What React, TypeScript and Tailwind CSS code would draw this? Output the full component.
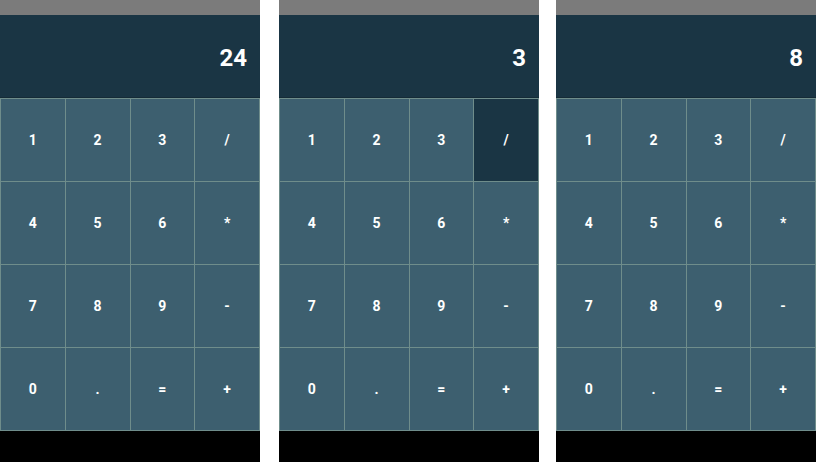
import React from "react";

const KEYS = ["1", "2", "3", "/", "4", "5", "6", "*", "7", "8", "9", "-", "0", ".", "=", "+"];

function Calculator({ value, pressed }: { value: string; pressed?: string }) {
  return (
    <div className="flex w-[260px] flex-col bg-black">
      <div className="h-[15px] bg-[#7b7b7b]" />
      {/* display */}
      <div className="flex h-[82px] items-center justify-end bg-[#1a3544] pr-[13px] pt-[4px]">
        <span className="text-[24px] font-bold leading-none text-white">{value}</span>
      </div>
      <div className="h-px bg-[#152b37]" />
      {/* keypad */}
      <div className="grid h-[333px] grid-cols-4 grid-rows-4 gap-px bg-[#6f8d8b] p-px">
        {KEYS.map((k) => (
          <button
            key={k}
            className={`flex items-center justify-center text-[14px] font-bold text-white ${
              k === pressed ? "bg-[#1a3544]" : "bg-[#3d5f6f]"
            }`}
          >
            {k}
          </button>
        ))}
      </div>
      <div className="h-[31px] bg-black" />
    </div>
  );
}

export default function App() {
  return (
    <div className="flex h-[462px] w-[816px] bg-white font-['Roboto',sans-serif]">
      <Calculator value="24" />
      <div className="w-[19px]" />
      <Calculator value="3" pressed="/" />
      <div className="w-[17px]" />
      <Calculator value="8" />
    </div>
  );
}
